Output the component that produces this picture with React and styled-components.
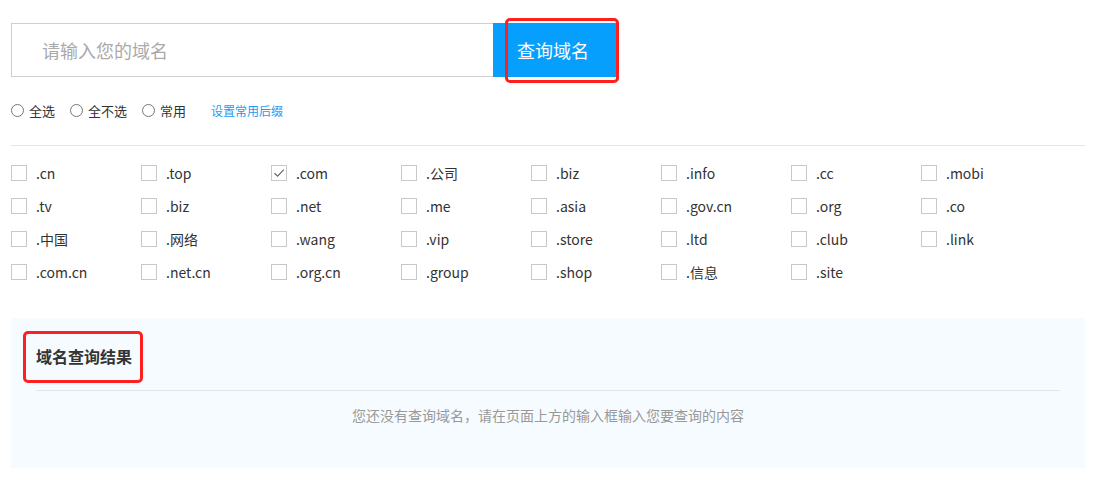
import React from 'react'
import styled, {createGlobalStyle} from 'styled-components'

const GlobalStyle = createGlobalStyle`
  body {
    margin: 0;
    background: #fff;
    font-family: "Noto Sans CJK SC", "Noto Sans", sans-serif;
    color: #333;
  }
`

const Page = styled.div`
  width: 1074px;
  padding: 23px 0 0 11px;
`

const SearchRow = styled.div`
  display: flex;
  height: 54px;
`

const SearchInput = styled.input`
  box-sizing: border-box;
  width: 482px;
  height: 54px;
  border: 1px solid #cfcfcf;
  border-right: none;
  padding: 0 0 0 30px;
  font-family: inherit;
  font-size: 18px;
  color: #333;
  outline: none;

  &::placeholder {
    color: #aaa;
  }
`

const SearchButton = styled.button`
  position: relative;
  width: 124px;
  height: 54px;
  border: none;
  background: #069ffd;
  color: #fff;
  font-family: inherit;
  font-size: 18px;
  text-align: left;
  padding: 0 0 0 24px;
  cursor: pointer;
`

// red annotation frame drawn over a marked element
const Frame = styled.span`
  position: absolute;
  top: ${(p) => p.$top}px;
  right: ${(p) => p.$right}px;
  bottom: ${(p) => p.$bottom}px;
  left: ${(p) => p.$left}px;
  border: 3px solid #ff1f1f;
  border-radius: 5px;
  pointer-events: none;
`

const OptionRow = styled.div`
  display: flex;
  align-items: center;
  height: 17px;
  margin-top: 25px;
  font-size: 13px;
`

const RadioLabel = styled.label`
  display: flex;
  align-items: center;
  margin-right: 15px;
  color: #333;
`

const RadioDot = styled.span`
  box-sizing: border-box;
  width: 13px;
  height: 13px;
  border: 1px solid #767676;
  border-radius: 50%;
  margin-right: 5px;
`

const SetLink = styled.a`
  margin-left: 10px;
  font-size: 12px;
  color: #1a9cf0;
  text-decoration: none;
`

const Divider = styled.div`
  height: 1px;
  background: #e6e6e6;
  margin-top: 26px;
`

const SuffixGrid = styled.div`
  display: grid;
  grid-template-columns: repeat(8, 130px);
  grid-auto-rows: 33px;
  margin-top: 10px;
`

const Suffix = styled.label`
  display: flex;
  align-items: center;
  font-size: 14px;
  color: #333;
`

const Box = styled.span`
  box-sizing: border-box;
  display: flex;
  align-items: center;
  justify-content: center;
  width: 16px;
  height: 16px;
  border: 1px solid #c8c8c8;
  margin-right: 9px;
`

const ResultPanel = styled.div`
  margin-top: 30px;
  height: 150px;
  background: #f6fbff;
  padding: 0 25px;
`

const ResultHead = styled.div`
  height: 72px;
  display: flex;
  align-items: center;
  border-bottom: 1px solid #e1e5e9;
`

const ResultTitle = styled.h3`
  position: relative;
  margin: 0;
  font-size: 16px;
  font-weight: bold;
  color: #333;
  line-height: 20px;
  top: 2px;
`

const EmptyText = styled.p`
  margin: 14px 0 0;
  text-align: center;
  font-size: 14px;
  color: #999;
`

const suffixes = [
  '.cn', '.top', '.com', '.公司', '.biz', '.info', '.cc', '.mobi',
  '.tv', '.biz', '.net', '.me', '.asia', '.gov.cn', '.org', '.co',
  '.中国', '.网络', '.wang', '.vip', '.store', '.ltd', '.club', '.link',
  '.com.cn', '.net.cn', '.org.cn', '.group', '.shop', '.信息', '.site',
]

const Check = () => (
  <svg width="12" height="10" viewBox="0 0 12 10">
    <path d="M1.5 5.2 L4.6 8.2 L10.8 1.6" fill="none" stroke="#666" strokeWidth="1.2" />
  </svg>
)

export default function App() {
  return (
    <>
      <GlobalStyle />
      <Page>
        <SearchRow>
          <SearchInput placeholder="请输入您的域名" />
          <SearchButton>
            查询域名
            <Frame $top={-5} $right={-2} $bottom={-6} $left={12} />
          </SearchButton>
        </SearchRow>

        <OptionRow>
          <RadioLabel>
            <RadioDot />
            全选
          </RadioLabel>
          <RadioLabel>
            <RadioDot />
            全不选
          </RadioLabel>
          <RadioLabel>
            <RadioDot />
            常用
          </RadioLabel>
          <SetLink href="#">设置常用后缀</SetLink>
        </OptionRow>

        <Divider />

        <SuffixGrid>
          {suffixes.map((s, i) => (
            <Suffix key={i}>
              <Box>{s === '.com' && <Check />}</Box>
              {s}
            </Suffix>
          ))}
        </SuffixGrid>

        <ResultPanel>
          <ResultHead>
            <ResultTitle>
              域名查询结果
              <Frame $top={-15} $right={-11} $bottom={-17} $left={-13} />
            </ResultTitle>
          </ResultHead>
          <EmptyText>您还没有查询域名，请在页面上方的输入框输入您要查询的内容</EmptyText>
        </ResultPanel>
      </Page>
    </>
  )
}
